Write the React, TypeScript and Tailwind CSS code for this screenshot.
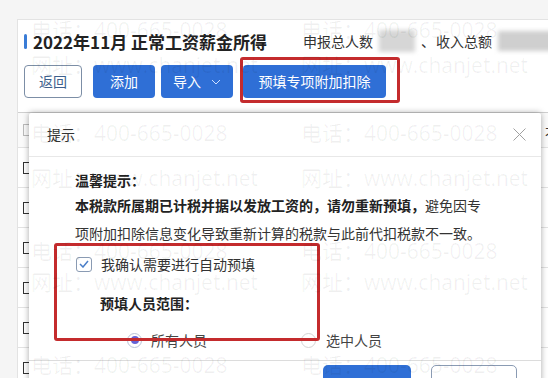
const marks = [
  { top: 19, text: "电话：400-665-0028" },
  { top: 54, text: "网址：www.chanjet.net" },
  { top: 122, text: "电话：400-665-0028" },
  { top: 167, text: "网址：www.chanjet.net" },
  { top: 240, text: "电话：400-665-0028" },
  { top: 271, text: "网址：www.chanjet.net" },
  { top: 354, text: "电话：400-665-0028" },
];

const rows = [0, 1, 2, 3, 4, 5];

function Cols({ header }: { header?: boolean }) {
  return (
    <div className="flex h-full">
      <div className="w-[30px] flex items-center pl-[5px] border-r border-[#e2e2e2]">
        <div className={header ? "w-[12px] h-[12px] border border-[#bbb]" : "w-[12px] h-[12px] border border-[#333]"} />
      </div>
      <div className="w-[81px] border-r border-[#e2e2e2]" />
      <div className="w-[85px] border-r border-[#e2e2e2]" />
      <div className="w-[129px] border-r border-[#e2e2e2]" />
      <div className="w-[166px] border-r border-[#e2e2e2]" />
      <div className="flex-1 pl-[36px] pt-[10px] text-[13px] text-[#333]">{header ? "不" : ""}</div>
    </div>
  );
}

export default function App() {
  return (
    <div className="relative w-[548px] h-[378px] overflow-hidden bg-[#f5f5f5] font-['Noto_Sans_CJK_SC',sans-serif]">
      <div className="pt-[19px] pl-[17px]">
        <div className="w-[560px] h-[400px] bg-white border-l border-t border-[#e3e3e3]">
          {/* title */}
          <div className="flex items-center h-[20px] mt-[11px] pl-[6px]">
            <div className="w-[3px] h-[15px] rounded-sm bg-[#3a7cd6]" />
            <span className="ml-[6px] text-[17px] font-bold text-[#222] leading-none">2022年11月 正常工资薪金所得</span>
            <span className="ml-[36px] text-[14px] text-[#333]">申报总人数</span>
            <div className="ml-[6px] w-[36px] h-[22px] bg-[#d6d6d6] blur-[2px]" />
            <span className="ml-[6px] text-[14px] text-[#333]">、</span>
            <span className="ml-[1px] text-[14px] text-[#333]">收入总额</span>
            <div className="ml-[6px] w-[60px] h-[20px] bg-[#cfcfcf] blur-[2px]" />
          </div>

          {/* buttons */}
          <div className="flex items-center mt-[14px] pl-[6px] text-[14px]">
            <button className="w-[58px] h-[33px] rounded-[4px] border border-[#7c8ea6] text-[#3d5f8c] bg-white">返回</button>
            <button className="ml-[11px] w-[62px] h-[33px] rounded-[4px] bg-[#2f6fd6] text-white">添加</button>
            <button className="ml-[6px] w-[72px] h-[33px] rounded-[4px] bg-[#2f6fd6] text-white flex items-center justify-center gap-[10px]">
              导入
              <svg width="10" height="6" viewBox="0 0 10 6" fill="none" stroke="#cfe0ff" strokeWidth="1">
                <path d="M1 1l4 4 4-4" />
              </svg>
            </button>
            <div className="relative ml-[10px]">
              <button className="w-[143px] h-[33px] rounded-[4px] bg-[#2f6fd6] text-white">预填专项附加扣除</button>
              <div className="absolute -left-[3px] -right-[14px] -top-[8px] -bottom-[5px] border-[3px] border-[#c42b2d] rounded-[3px]" />
            </div>
          </div>

          {/* table */}
          <div className="mt-[14px] border-t border-[#cfcfcf]">
            <div className="h-[35px] border-b border-[#e2e2e2] bg-[#fafafa]">
              <Cols header />
            </div>
            {rows.map((r) => (
              <div key={r} className="h-[40px] border-b border-[#e2e2e2]">
                <Cols />
              </div>
            ))}
          </div>
        </div>
      </div>

      {/* dialog */}
      <div className="absolute left-[29px] top-[113px] w-[512px] h-[300px] bg-white rounded-[2px] shadow-[0_0_6px_rgba(0,0,0,0.35)]">
        <div className="flex items-center justify-between h-[44px] pl-[18px] pr-[15px] border-b border-[#e8e8e8]">
          <span className="text-[14px] text-[#333]">提示</span>
          <svg width="13" height="13" viewBox="0 0 13 13" stroke="#a0a0a0" strokeWidth="1">
            <path d="M0.5 0.5l12 12M12.5 0.5l-12 12" />
          </svg>
        </div>
        <div className="pl-[46px] text-[14px] text-[#222]">
          <div className="pt-[13px] leading-[21px] font-bold">温馨提示：</div>
          <div className="leading-[28px]">
            <div>
              <span className="font-bold">本税款所属期已计税并据以发放工资的，请勿重新预填，</span>
              <span className="text-[#333]">避免因专</span>
            </div>
            <div className="text-[#333]">项附加扣除信息变化导致重新计算的税款与此前代扣税款不一致。</div>
          </div>
          <div className="flex items-center h-[20px] mt-[7px] ml-[1px]">
            <div className="w-[16px] h-[15px] rounded-[3px] border border-[#8a9bb3] flex items-center justify-center">
              <svg width="10" height="8" viewBox="0 0 10 8" fill="none" stroke="#4a7ec8" strokeWidth="1.5">
                <path d="M1 4l3 3 5-6" />
              </svg>
            </div>
            <span className="ml-[9px] text-[#333]">我确认需要进行自动预填</span>
          </div>
          <div className="h-[20px] mt-[19px] ml-[25px] flex items-center font-bold">预填人员范围：</div>
          <div className="flex items-center h-[20px] mt-[17px] ml-[52px] text-[#444]">
            <div className="w-[15px] h-[15px] rounded-full border border-[#b9c3d8] flex items-center justify-center">
              <div className="w-[8px] h-[8px] rounded-full bg-[#6563d6]" />
            </div>
            <span className="ml-[9px]">所有人员</span>
            <div className="ml-[94px] w-[15px] h-[15px] rounded-full border border-[#d4d4d4]" />
            <span className="ml-[10px]">选中人员</span>
          </div>
        </div>
        <div className="mt-[10px] border-t border-[#dcdcdc] flex pt-[4px] pl-[294px] gap-[20px]">
          <button className="w-[88px] h-[30px] rounded-[5px] bg-[#2f6fd6]" />
          <button className="w-[86px] h-[30px] rounded-[5px] border border-[#8a9bb3] bg-white" />
        </div>
        <div className="absolute left-[25px] top-[130px] w-[266px] h-[98px] border-[3px] border-[#c42b2d] rounded-[3px]" />
      </div>

      {/* watermark */}
      <div className="absolute inset-0 pointer-events-none">
        {marks.map((m, i) => (
          <div key={i} className="absolute left-0 right-0 flex" style={{ top: m.top }}>
            <span className="ml-[31px] w-[270px] text-[21px] leading-[22px] text-black/[0.06] font-['Open_Sans','Noto_Sans_CJK_SC',sans-serif]">{m.text}</span>
            <span className="text-[21px] leading-[22px] text-black/[0.06] font-['Open_Sans','Noto_Sans_CJK_SC',sans-serif]">{m.text}</span>
          </div>
        ))}
      </div>
    </div>
  );
}
